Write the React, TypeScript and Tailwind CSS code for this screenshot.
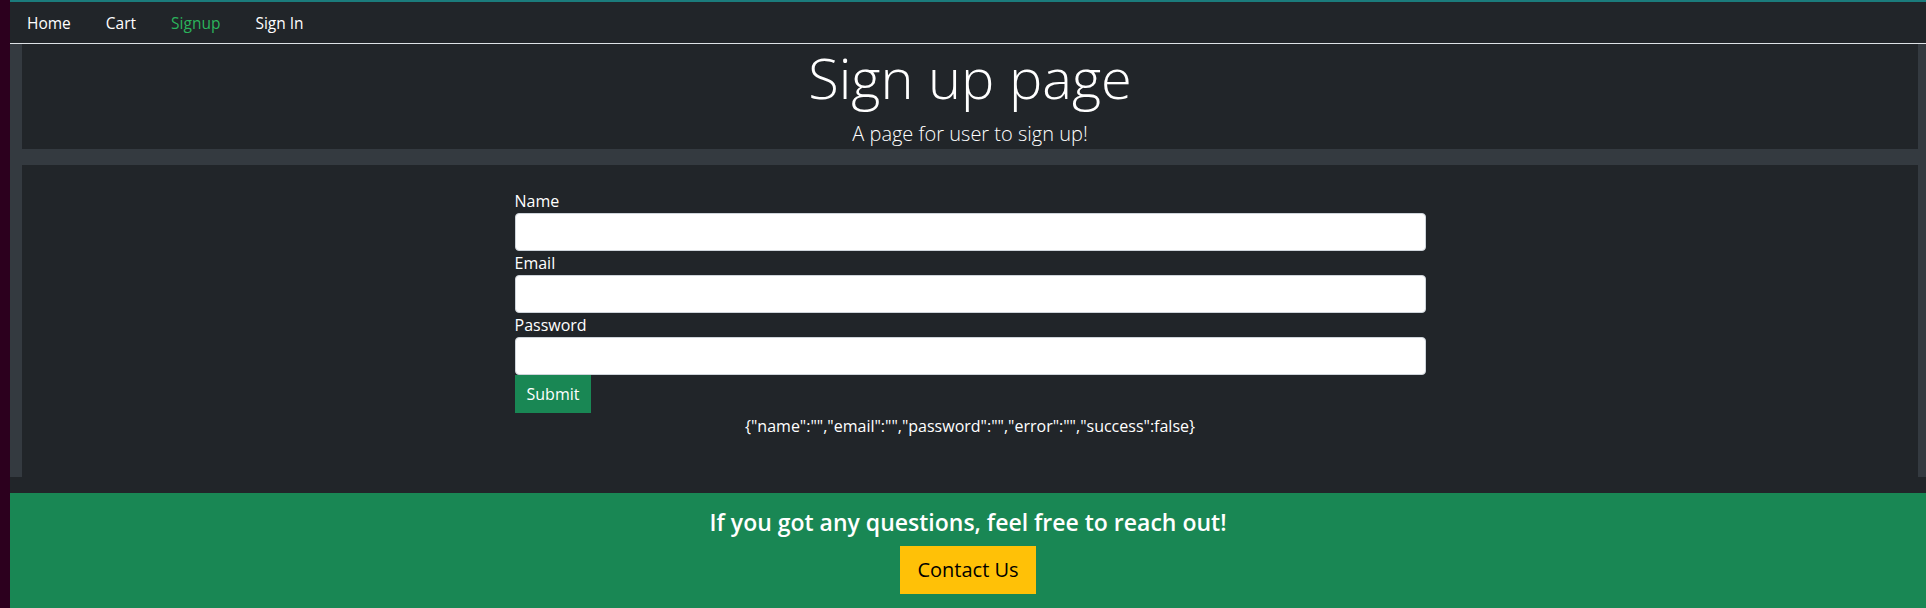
import React from "react";

export default function App() {
  const font = { fontFamily: "'Open Sans', Lato, sans-serif" };
  return (
    <div className="flex min-h-screen bg-[#2c001e]" style={font}>
      <div className="w-[10px] shrink-0" />
      <div className="flex min-w-0 flex-1 flex-col bg-[#212529] text-white">
        <div className="h-[2px] bg-[#1b7c7c]" />
        <nav className="flex h-[42px] items-center gap-[35px] border-b border-[#dee2e6] pl-[17px] text-[15.5px] leading-6">
          <a className="text-white">Home</a>
          <a className="text-white">Cart</a>
          <a className="text-[#2bb35c]">Signup</a>
          <a className="text-white">Sign In</a>
        </nav>
        <main className="bg-[#343a40] pl-3 pr-2">
          <section className="mb-4 bg-[#212529] text-center">
            <h1 className="mb-2 text-[56px] font-light leading-[67px]">Sign up page</h1>
            <p className="text-[20px] font-light leading-[30px]">A page for user to sign up!</p>
          </section>
          <section className="bg-[#212529] pb-[23px] pt-6">
            <form className="mx-auto w-[911px]" onSubmit={(e) => e.preventDefault()}>
              <label className="block text-[16px] leading-6">Name</label>
              <input className="block h-[38px] w-full rounded-[4px] border border-[#ced4da] bg-white" />
              <label className="block text-[16px] leading-6">Email</label>
              <input className="block h-[38px] w-full rounded-[4px] border border-[#ced4da] bg-white" />
              <label className="block text-[16px] leading-6">Password</label>
              <input type="password" className="block h-[38px] w-full rounded-[4px] border border-[#ced4da] bg-white" />
              <button className="h-[38px] bg-[#198754] px-3 text-[16px] leading-6 text-white">Submit</button>
            </form>
            <p className="mb-4 mt-px text-center text-[16px] leading-6">
              {'{"name":"","email":"","password":"","error":"","success":false}'}
            </p>
          </section>
        </main>
        <div className="h-4" />
        <footer className="flex flex-1 flex-col items-center bg-[#198754] pb-[14px] pt-[15px]">
          <h4 className="mb-[9px] text-[23px] font-semibold leading-[29px]">If you got any questions, feel free to reach out!</h4>
          <button className="border border-[#ffc107] bg-[#ffc107] px-4 py-2 text-[20px] leading-[30px] text-black">
            Contact Us
          </button>
        </footer>
      </div>
    </div>
  );
}
